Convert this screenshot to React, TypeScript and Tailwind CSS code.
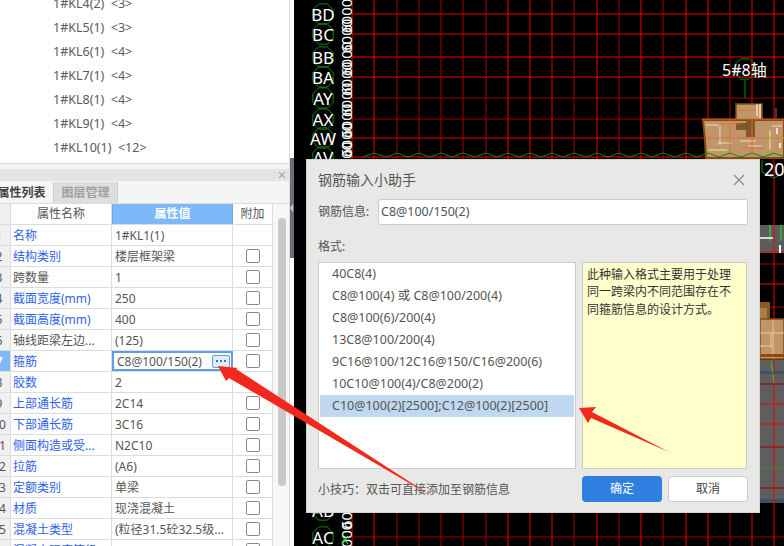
const treeItems = ['1#KL4(2) <3>', '1#KL5(1) <3>', '1#KL6(1) <4>', '1#KL7(1) <4>', '1#KL8(1) <4>', '1#KL9(1) <4>', '1#KL10(1) <12>'];

const props = [
  { name: '名称', value: '1#KL1(1)', blue: true, check: false },
  { name: '结构类别', value: '楼层框架梁', blue: true, check: true },
  { name: '跨数量', value: '1', blue: false, check: true },
  { name: '截面宽度(mm)', value: '250', blue: true, check: true },
  { name: '截面高度(mm)', value: '400', blue: true, check: true },
  { name: '轴线距梁左边...', value: '(125)', blue: false, check: true },
  { name: '箍筋', value: 'C8@100/150(2)', blue: true, check: true },
  { name: '胶数', value: '2', blue: true, check: false },
  { name: '上部通长筋', value: '2C14', blue: true, check: true },
  { name: '下部通长筋', value: '3C16', blue: true, check: true },
  { name: '侧面构造或受...', value: 'N2C10', blue: true, check: true },
  { name: '拉筋', value: '(A6)', blue: true, check: true },
  { name: '定额类别', value: '单梁', blue: true, check: true },
  { name: '材质', value: '现浇混凝土', blue: true, check: true },
  { name: '混凝土类型', value: '(粒径31.5砼32.5级...', blue: true, check: true },
  { name: '混凝土强度等级', value: '', blue: true, check: true },
];

const formats = [
  '40C8(4)',
  'C8@100(4) 或 C8@100/200(4)',
  'C8@100(6)/200(4)',
  '13C8@100/200(4)',
  '9C16@100/12C16@150/C16@200(6)',
  '10C10@100(4)/C8@200(2)',
  'C10@100(2)[2500];C12@100(2)[2500]',
];

const gridX = [
  [374, 1], [397, 0], [419, 0], [441, 0], [463, 0], [486, 0], [508, 1], [530, 1], [552, 1], [574, 0],
  [597, 1], [619, 0], [641, 1], [663, 0], [686, 1], [708, 1], [730, 0], [752, 1], [774, 1],
];
const gridY = [
  [14, 1], [34, 1], [57, 1], [77, 1], [98, 0], [119, 0], [138, 1], [157, 1], [252, 1], [264, 0], [284, 1], [307, 0],
  [384, 0], [404, 1], [424, 1], [447, 0], [488, 0], [537, 0],
];
const axisLabels = [
  ['BD', 14], ['BC', 34], ['BB', 57], ['BA', 77], ['AY', 98], ['AX', 119], ['AW', 138], ['AV', 157], ['AB', 510], ['AC', 537],
] as const;

const BRIGHT = '#f00000';
const DIM = '#a00000';

function octagon(cx: number, cy: number, r: number) {
  const pts: string[] = [];
  for (let i = 0; i < 8; i++) {
    const a = (Math.PI / 4) * i + Math.PI / 8;
    pts.push(`${cx + r * Math.cos(a)},${cy + r * Math.sin(a)}`);
  }
  return pts.join(' ');
}

// peaks of the axis bubbles that stick out above the dialog
const zigzag = gridX.map(([x]) => `${x - 11},157 ${x},153`).join(' ') + ' 785,157';

function CadCanvas() {
  return (
    <svg className="block h-[546px] w-[490px] bg-black" viewBox="294 0 490 546">
      <rect x="760" y="225" width="24" height="28" fill="#5c5c5c" />
      <rect x="760" y="360" width="24" height="143" fill="#5e5e5e" />
      <rect x="760" y="371" width="24" height="3" fill="#3c5068" />
      <rect x="760" y="499" width="24" height="4" fill="#3c5068" />
      {gridY.map(([y, bright]) => (
        <line key={y} x1="352" x2="784" y1={y} y2={y} stroke={bright ? BRIGHT : DIM} strokeWidth="1.2" />
      ))}
      <line x1="352" x2="352" y1="0" y2="546" stroke={BRIGHT} />
      {gridX.map(([x, bright]) => (
        <line key={x} x1={x} x2={x} y1="0" y2="546" stroke={bright ? BRIGHT : DIM} />
      ))}
      {/* building */}
      <rect x="736" y="104" width="26" height="17" fill="#c09668" stroke="#8a4b10" strokeWidth="1.5" />
      <path d="M703 120H784V158H706L705 140Z" fill="#c09668" stroke="#8a4b10" strokeWidth="2" />
      <rect x="736" y="123" width="12" height="7" fill="#7a5a30" />
      <rect x="746" y="120" width="9" height="17" fill="#85562a" />
      <path d="M757 104v12M760 104v14" stroke="#f2dfb8" strokeWidth="1.5" />
      <path d="M706 125h12M718 143h14M740 141h16M772 126h10M720 125v20M770 130v20M708 150h20M748 146h14" stroke="#eedcb4" strokeWidth="1" fill="none" />
      <path d="M707 138h77M702 119h82M738 110h18M720 124h20M742 148h22M730 120v38M752 120v38" stroke="#e8663a" strokeWidth="0.8" fill="none" />
      <path d="M728 122v30M766 130v26M738 108h14M718 152h18M768 138h16" stroke="#9bb24e" strokeWidth="0.8" fill="none" />
      <path d="M716 122v34M760 122v34M732 122v34" stroke="#c67ab0" strokeWidth="1" strokeDasharray="2 6" fill="none" />
      <path d="M777 128v6M780 143v5" stroke="#fff" strokeWidth="1.5" />
      <rect x="760" y="302" width="10" height="18" fill="#8a5a1c" />
      <rect x="760" y="308" width="7" height="12" fill="#a88050" />
      <rect x="760" y="319" width="24" height="40" fill="#c09668" stroke="#8a4b10" strokeWidth="1.5" />
      <path d="M760 333h24M773 320v38M760 346h12M771 334v14" stroke="#e8c898" strokeWidth="1" fill="none" />
      <path d="M768 322v34M760 326h24" stroke="#c67ab0" strokeWidth="0.8" strokeDasharray="2 4" fill="none" />
      <rect x="761" y="354" width="23" height="3" fill="#8a4b10" />
      <path d="M771 361l2 12M773 374l1 9" stroke="#30d030" strokeWidth="1" fill="none" />
      <path d="M770 225v16M781 225v16" stroke="#30d030" strokeWidth="1.2" fill="none" />
      <path d="M760 238h13" stroke="#fff" strokeWidth="1.5" />
      <path d="M780 245v8" stroke="#fff" strokeWidth="2" />
      <line x1="760" x2="784" y1="468" y2="468" stroke="#2f8f2f" />
      <line x1="776" x2="776" y1="108" y2="118" stroke="#777" />
      <polyline points={zigzag} fill="none" stroke="#0c8a0c" />
      <path d="M762 160V172L774 178L785 172" fill="none" stroke="#0c8a0c" />
      <polygon points={octagon(745, 69, 11)} fill="none" stroke="#0c8a0c" />
      <line x1="745" x2="745" y1="80" y2="98" stroke="#0c8a0c" />
      <text x="722" y="76" fill="#fff" fontSize="16">5#8轴</text>
      <text x="764" y="176" fill="#fff" fontSize="18">20</text>
      {/* axis bubbles on the left */}
      {axisLabels.map(([label, y]) => (
        <g key={label}>
          <polygon points={octagon(323, y, 11)} fill="none" stroke="#0c8a0c" />
          <text x="323" y={y + 6.5} textAnchor="middle" fill="#fff" fontSize="17">{label}</text>
          <text transform={`translate(352 ${y + 19}) rotate(-90)`} fill="#fff" fontSize="15">6000</text>
        </g>
      ))}
      <path d="M342 536l6 8M348 536l-6 8" stroke="#30e030" strokeWidth="1.2" />
    </svg>
  );
}

function Arrows() {
  return (
    <svg className="pointer-events-none absolute left-0 top-0 h-[546px] w-[784px]" viewBox="0 0 784 546">
      <polygon points="218,366 238,368 236,369 433,497 229,378 226,381" fill="#f2281c" />
      <polygon points="579,408 596,407 592,412 669,452 591,418 588,423" fill="#f2281c" />
    </svg>
  );
}

function PropertyPanel() {
  return (
    <aside className="flex h-full w-[290px] shrink-0 flex-col overflow-hidden border-r border-[#dddddd] bg-white">
      <div className="h-[164px] shrink-0 overflow-hidden border-b border-[#dddddd] bg-white">
        <div className="-mt-[8px] pl-[53px] text-[12.5px] text-[#5a5a5a]">
          {treeItems.map((t) => (
            <div key={t} className="flex h-[24px] items-center whitespace-pre">
              {t.replace(' ', '  ')}
            </div>
          ))}
        </div>
      </div>
      <div className="h-[5px] shrink-0 bg-[#f3f3f3]" />
      <div className="flex h-[12px] shrink-0 items-center justify-end bg-[#e4e4e4] pr-[2px]">
        <svg className="h-[10px] w-[10px]" viewBox="0 0 10 10">
          <path d="M2 2l6 6M8 2l-6 6" stroke="#a8a8a8" strokeWidth="1.2" />
        </svg>
      </div>
      <div className="flex h-[23px] shrink-0 border-b border-[#dddddd] bg-[#f5f5f5] pt-[1px] text-[12px]">
        <div className="-ml-[10px] flex w-[64px] items-center justify-center border-r border-[#cccccc] font-bold text-[#444444]">属性列表</div>
        <div className="flex w-[64px] items-center justify-center border-r border-[#cccccc] bg-[#dedede] font-bold text-[#a0a0a0]">图层管理</div>
      </div>
      <div className="flex flex-1 overflow-hidden bg-[#f6f6f6]">
        <div className="-ml-[12px] w-[285px] shrink-0 bg-white text-[12px]">
          <div className="flex h-[21px] border-b border-[#dcdcdc] text-[#555555]">
            <div className="w-[23px] border-r border-[#dcdcdc] bg-[#f0f0f0]" />
            <div className="flex w-[101px] items-center justify-center border-r border-[#dcdcdc]">属性名称</div>
            <div className="flex w-[121px] items-center justify-center border-x border-[#6aa8ee] bg-[#7db8f8] font-bold text-white">属性值</div>
            <div className="flex w-[40px] items-center justify-center border-r border-[#dcdcdc]">附加</div>
          </div>
          {props.map((p, i) => {
            const selected = i === 6;
            return (
              <div key={p.name} className="flex h-[21px] border-b border-[#dcdcdc] text-[#555555]">
                <div
                  className={
                    selected
                      ? 'flex w-[23px] items-center justify-center border-r border-[#dcdcdc] bg-[#7db8f8] pt-[2px] font-bold text-white'
                      : 'flex w-[23px] items-center justify-center border-r border-[#dcdcdc] bg-[#f0f0f0] pt-[2px]'
                  }
                >
                  {i + 1}
                </div>
                <div className={p.blue ? 'flex w-[101px] items-center border-r border-[#dcdcdc] pl-[2px] pt-[2px] text-[#2f62e8]' : 'flex w-[101px] items-center border-r border-[#dcdcdc] pl-[2px] pt-[2px]'}>
                  {p.name}
                </div>
                {selected ? (
                  <div className="flex w-[121px] items-center justify-between border-2 border-[#5ba0e6] pl-[3px] pr-[1px]">
                    <span className="pt-[1px]">{p.value}</span>
                    <span className="flex h-[13px] w-[18px] items-center justify-center gap-[2px] rounded-[2px] border border-[#5ba0e6] bg-[#e4ebf8]">
                      <i className="h-[2px] w-[2px] bg-[#3f6fb8]" />
                      <i className="h-[2px] w-[2px] bg-[#3f6fb8]" />
                      <i className="h-[2px] w-[2px] bg-[#3f6fb8]" />
                    </span>
                  </div>
                ) : (
                  <div className="flex w-[121px] items-center whitespace-nowrap border-r border-[#dcdcdc] pl-[3px] pt-[2px]">{p.value}</div>
                )}
                <div className="flex w-[40px] items-center justify-center border-r border-[#dcdcdc]">
                  {p.check && <span className="h-[14px] w-[14px] rounded-[2px] border border-[#8a8a8a] bg-white" />}
                </div>
              </div>
            );
          })}
        </div>
        <div className="ml-[5px] mt-[14px] h-[268px] w-[8px] rounded-full bg-[#c8c8c8]" />
      </div>
    </aside>
  );
}

function RebarDialog() {
  return (
    <div className="absolute left-[306px] top-[159px] flex h-[354px] w-[454px] flex-col border border-[#d4d4d4] bg-[#e8e8e7] px-[11px] text-[#555555]">
      <div className="flex h-[39px] items-center justify-between pr-[2px]">
        <span className="text-[14px]">钢筋输入小助手</span>
        <svg className="h-[14px] w-[14px]" viewBox="0 0 14 14">
          <path d="M2 2l10 10M12 2l-10 10" stroke="#8a8a8a" strokeWidth="1.2" />
        </svg>
      </div>
      <div className="flex h-[26px] items-center text-[12px]">
        <span className="w-[60px]">钢筋信息:</span>
        <div className="flex h-[26px] flex-1 items-center rounded-[3px] border border-[#cccccc] bg-white pl-[2px] text-[12.5px] text-[#4a5560]">C8@100/150(2)</div>
      </div>
      <div className="mt-[15px] flex h-[13px] items-center text-[12px]">格式:</div>
      <div className="mt-[9px] flex h-[207px] gap-[6px]">
        <div className="w-[258px] border border-[#cccccc] bg-white px-[1px] text-[12.5px]">
          {formats.map((f, i) => (
            <div key={f} className={i === 6 ? 'flex h-[22px] items-center whitespace-nowrap bg-[#c0d8f0] pl-[12px]' : 'flex h-[22px] items-center whitespace-nowrap pl-[12px]'}>
              {f}
            </div>
          ))}
        </div>
        <div className="w-[165px] border border-[#cccccc] bg-[#ffffcc] px-[4px] pt-[3px] text-[12px] leading-[17.4px] text-[#333333]">
          此种输入格式主要用于处理同一跨梁内不同范围存在不同箍筋信息的设计方式。
        </div>
      </div>
      <div className="mt-[7px] flex items-center">
        <span className="flex-1 pt-[2px] text-[12px]">小技巧：双击可直接添加至钢筋信息</span>
        <button className="h-[26px] w-[80px] rounded-[4px] bg-[#2e7fe0] text-[12px] text-white">确定</button>
        <button className="ml-[6px] h-[26px] w-[80px] rounded-[4px] border border-[#cccccc] bg-white text-[12px] text-[#444444]">取消</button>
      </div>
    </div>
  );
}

export default function App() {
  return (
    <div className="relative flex h-[546px] w-[784px] overflow-hidden bg-black font-['Noto_Sans','Noto_Sans_CJK_SC',sans-serif]">
      <PropertyPanel />
      <div className="flex w-[4px] shrink-0 flex-col bg-white">
        <div className="mt-[158px] flex h-[100px] items-center bg-[#6b7078]">
          <span className="h-0 w-0 border-y-[4px] border-r-[3px] border-y-transparent border-r-[#c8ccd0]" />
        </div>
      </div>
      <CadCanvas />
      <RebarDialog />
      <Arrows />
    </div>
  );
}
